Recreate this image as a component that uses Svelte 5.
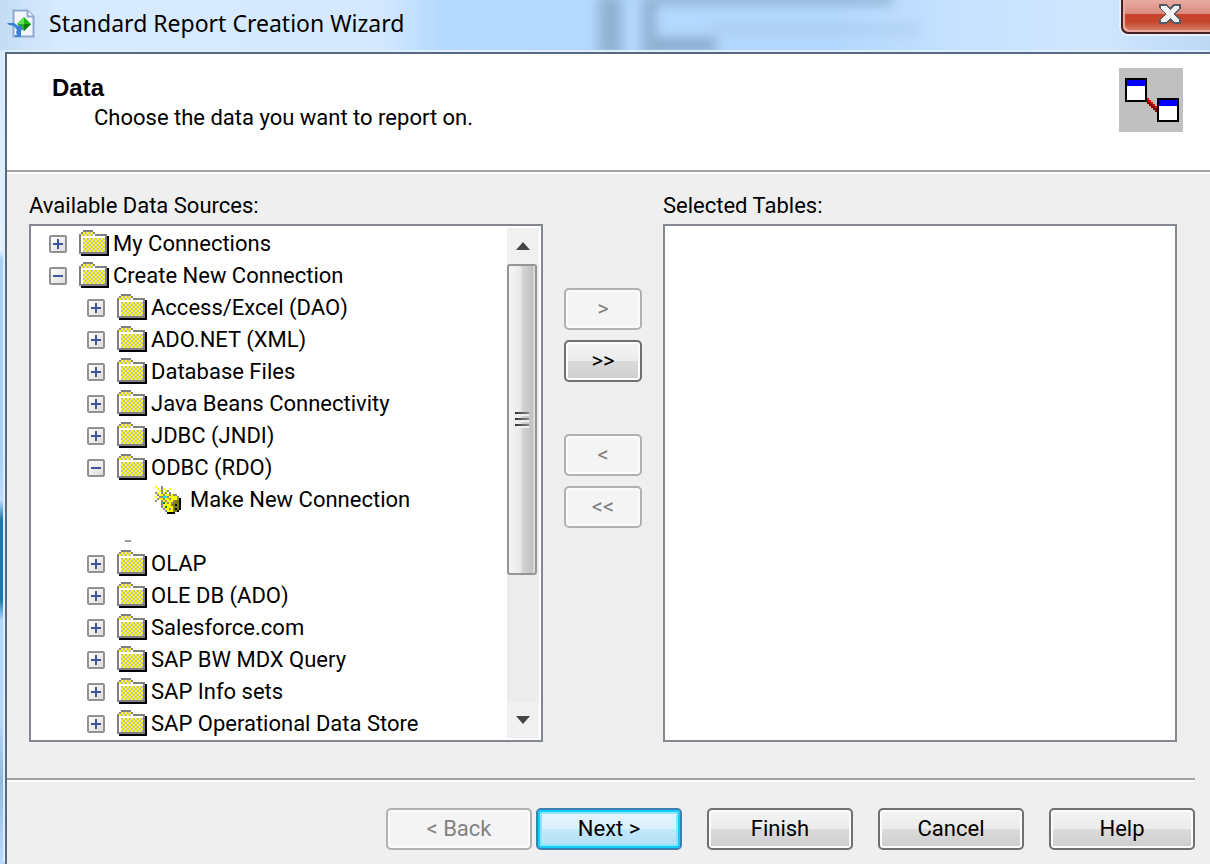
<script lang="ts">
	type Item = {
		label: string;
		level: number;
		kind?: "folder" | "action" | "blank";
		open?: boolean;
	};

	let items: Item[] = $state([
		{ label: "My Connections", level: 0 },
		{ label: "Create New Connection", level: 0, open: true },
		{ label: "Access/Excel (DAO)", level: 1 },
		{ label: "ADO.NET (XML)", level: 1 },
		{ label: "Database Files", level: 1 },
		{ label: "Java Beans Connectivity", level: 1 },
		{ label: "JDBC (JNDI)", level: 1 },
		{ label: "ODBC (RDO)", level: 1, open: true },
		{ label: "Make New Connection", level: 2, kind: "action" },
		{ label: "", level: 2, kind: "blank" },
		{ label: "OLAP", level: 1 },
		{ label: "OLE DB (ADO)", level: 1 },
		{ label: "Salesforce.com", level: 1 },
		{ label: "SAP BW MDX Query", level: 1 },
		{ label: "SAP Info sets", level: 1 },
		{ label: "SAP Operational Data Store", level: 1 },
	]);

	// One character per pixel, see sparkColors
	const spark = [
		"Y..G.........",
		".Y.GY..Y.....",
		"..YG.YG......",
		"GY.GYG.G.....",
		".GYYGYYGYGG..",
		"Y.GGCCGYYYYG.",
		".GYYGYYGYYYGK",
		"G..GYGYYYGOOK",
		"...GEYGYGOOOK",
		"...GYYYYOOKOK",
		"...GYEYYYOOOK",
		"....GYYGYOKOK",
		".....GYYYOOK.",
		"......KKKK...",
	];
	const sparkColors: Record<string, string> = {
		Y: "#ffff00",
		G: "#8c8c80",
		O: "#808000",
		K: "#000000",
		C: "#20e0e0",
		E: "#008040",
	};
</script>

<div class="window">
	<header class="titlebar">
		<svg class="app-icon" width="28" height="30" viewBox="0 0 28 30" aria-hidden="true">
			<path d="M6.500 1.500h14l6 6v20h-20z" fill="#f2f6fb" stroke="#8fa9cf" stroke-width="2" />
			<path d="M20.500 1.500v6h6" fill="#fff" stroke="#8fa9cf" stroke-width="2" />
			<path d="M17 8l7 7-7 7-7-7z" fill="#18b818" />
			<path d="M17 8v7h-7z" fill="#67dc55" />
			<path d="M17 22v-7h7z" fill="#087d12" />
			<path d="M0 14h7l4 3 3-2v3l2 1-2 3v6H8v-2h2l-1-3 1-2-3-4-5-1z" fill="#397fd3" />
		</svg>
		<h1>Standard Report Creation Wizard</h1>
		<div class="ghost" aria-hidden="true"></div>
		<button class="close" aria-label="Close">
			<svg width="22" height="20" viewBox="0 0 11 10" shape-rendering="crispEdges">
				<path d="M0 0h4l1.500 2L7 0h4v2L8 5l3 3v2H7L5.500 8 4 10H0V8l3-3-3-3z" fill="#555c69" />
				<path d="M1 1h2.500l2 2 2-2H10v1L7.500 5 10 8v1H7.500l-2-2-2 2H1V8l2.500-3L1 2z" fill="#f2f2f2" />
			</svg>
		</button>
	</header>

	<div class="frame">
		<div class="intro">
			<div>
				<h2>Data</h2>
				<p>Choose the data you want to report on.</p>
			</div>
			<svg width="64" height="64" viewBox="0 0 32 32" shape-rendering="crispEdges" aria-hidden="true">
				<path d="M0 0h32v32H0z" fill="#c0c0c0" />
				{#each [0, 1, 2, 3, 4] as i}
					<rect x={14 + i} y={15 + i} width="1" height="1" fill="#f00" />
					<rect x={14 + i} y={16 + i} width="1" height="2" fill="#900000" />
				{/each}
				<path d="M3 5h11v12H3zM19 15h11v12H19z" fill="#000" />
				<path d="M4 6h9v10H4zM20 16h9v10h-9z" fill="#fff" />
				<path d="M4 6h9v3H4zM20 16h9v3h-9z" fill="#00f" />
			</svg>
		</div>

		<main>
			<section>
				<h3 id="sources">Available Data Sources:</h3>
				<div class="panel">
					<ul aria-labelledby="sources">
						{#each items as item}
							<li class="level-{item.level}">
								{#if item.kind === "blank"}
									<span class="dash"></span>
								{:else if item.kind === "action"}
									<svg width="26" height="28" viewBox="0 0 13 14" shape-rendering="crispEdges" aria-hidden="true">
										{#each spark as row, y}
											{#each row as c, x}
												{#if c !== "."}
													<rect {x} {y} width="1" height="1" fill={sparkColors[c]} />
												{/if}
											{/each}
										{/each}
									</svg>
									<a href="#new">{item.label}</a>
								{:else}
									<button
										class="toggle"
										aria-label={item.label}
										aria-expanded={!!item.open}
										onclick={() => (item.open = !item.open)}
									>
										<svg width="10" height="10" viewBox="0 0 5 5" shape-rendering="crispEdges">
											<path d={item.open ? "M0 2h5v1H0z" : "M0 2h2V0h1v2h2v1H3v2H2V3H0z"} fill="#3c559f" />
										</svg>
									</button>
									<svg class="folder" width="30" height="26" viewBox="0 0 15 13" shape-rendering="crispEdges" aria-hidden="true">
										<defs>
											<pattern id="dither" width="2" height="2" patternUnits="userSpaceOnUse">
												<path d="M0 0h2v2H0z" fill="#ff0" />
												<path d="M0 0h1v1H0zM1 1h1v1H1z" fill="#c0c0c0" />
											</pattern>
										</defs>
										<path d="M1 12h13V3h1v10H1z" fill="#000" />
										<path d="M0 2h1V1h1V0h5v1h1v1h6v10H0z" fill="#808080" />
										<path d="M1 2h1V1h5v1h1v1h5v8H1z" fill="#fff" />
										<path d="M2 1h5v1H2zM1 2h6v1H1zM2 4h11v7H2z" fill="url(#dither)" />
									</svg>
									<span>{item.label}</span>
								{/if}
							</li>
						{/each}
					</ul>
					<div class="scrollbar">
						<button aria-label="Scroll up">
							<svg width="14" height="8" viewBox="0 0 14 8"><path d="M7 0l7 8H0z" fill="#444" /></svg>
						</button>
						<div class="track">
							<div class="thumb"><i></i><i></i><i></i></div>
						</div>
						<button aria-label="Scroll down">
							<svg width="14" height="8" viewBox="0 0 14 8"><path d="M0 0h14L7 8z" fill="#444" /></svg>
						</button>
					</div>
				</div>
			</section>

			<div class="movers">
				<div>
					<button class="btn" disabled>&gt;</button>
					<button class="btn">&gt;&gt;</button>
				</div>
				<div>
					<button class="btn" disabled>&lt;</button>
					<button class="btn" disabled>&lt;&lt;</button>
				</div>
			</div>

			<section>
				<h3>Selected Tables:</h3>
				<div class="panel"></div>
			</section>
		</main>

		<footer>
			<div class="pair">
				<button class="btn" disabled>&lt; Back</button>
				<button class="btn default">Next &gt;</button>
			</div>
			<button class="btn">Finish</button>
			<button class="btn">Cancel</button>
			<button class="btn">Help</button>
		</footer>
	</div>
</div>

<style>
	:global(body) {
		margin: 0;
	}

	.window {
		display: flex;
		flex-direction: column;
		min-height: 100vh;
		box-sizing: border-box;
		padding-left: 3px;
		background: linear-gradient(
			#bddcf8 0,
			#d5eaff 54px,
			#e4f2ff 250px,
			#a9cff6 260px,
			#a9cff6 460px,
			#bddcff 500px,
			#1878b4 520px,
			#1878b4 600px,
			#b0d7fa 620px,
			#b8d9f8 720px,
			#91b8de 780px,
			#b9dafb 100%
		);
		color: #000;
		font-family: Roboto, "Liberation Sans", sans-serif;
		font-size: 22px;
		line-height: 32px;
	}

	h1,
	h2,
	h3,
	p,
	ul {
		margin: 0;
		padding: 0;
		font-size: inherit;
		font-weight: normal;
	}

	/* Title bar */
	.titlebar {
		position: relative;
		display: flex;
		align-items: flex-start;
		height: 50px;
		margin-left: -3px;
		padding-left: 7px;
		background: linear-gradient(
			90deg,
			#c3ddf5 0,
			#d9ebff 60px,
			#d4e8ff 380px,
			#b5daff 440px,
			#b4d8fd 840px,
			#c6e2ff 960px,
			#d0e6ff 1100px,
			#bcd9f4 100%
		);
		overflow: hidden;
	}
	.app-icon {
		margin-top: 9px;
	}
	h1 {
		margin: 7px 0 0 14px;
		font-family: "Noto Sans", "Open Sans", sans-serif;
		font-size: 23px;
	}
	/* Blurred remains of the window behind the glass */
	.ghost {
		position: absolute;
		left: 598px;
		top: -4px;
		width: 320px;
		height: 60px;
		filter: blur(6px);
		background:
			linear-gradient(#90b1d2, #90b1d2) 0 0 / 24px 60px no-repeat,
			linear-gradient(#90b1d2, #90b1d2) 44px 0 / 14px 60px no-repeat,
			linear-gradient(#88a8ca, #88a8ca) 44px 0 / 250px 8px no-repeat,
			linear-gradient(#88a8ca, #88a8ca) 44px 42px / 74px 14px no-repeat,
			linear-gradient(#a3c4e8, #a3c4e8) 110px 31px / 270px 5px no-repeat;
	}
	.close {
		display: flex;
		align-items: flex-start;
		justify-content: center;
		box-sizing: border-box;
		width: 89px;
		height: 34px;
		margin-left: auto;
		padding: 4px 0 0 6px;
		border: 2px solid #4a1d20;
		border-width: 0 0 2px 2px;
		border-radius: 0 0 0 7px;
		background: linear-gradient(#e9aca2 0, #d98a7c 14px, #c6432a 14px, #c4472d 22px, #d98470 100%);
		box-shadow: inset 2px -2px #e9aaa0, 0 0 0 2px #e2f0ff;
	}

	/* Client area */
	.frame {
		flex: 1;
		display: flex;
		flex-direction: column;
		margin-top: 2px;
		margin-left: 2px;
		border-left: 2px solid #566980;
		border-top: 2px solid #566980;
		box-shadow: -2px -2px #dceeff;
		background: #efefef;
	}
	.intro {
		display: flex;
		justify-content: space-between;
		align-items: flex-start;
		padding: 14px 27px 38px 45px;
		background: #fff;
		border-bottom: 2px solid #a0a0a0;
		box-shadow: 0 2px #fff;
	}
	.intro h2 {
		margin-top: 4px;
		font-family: "Liberation Sans", sans-serif;
		font-size: 24px;
		font-weight: bold;
	}
	.intro p {
		margin: -2px 0 0 42px;
	}
	/* the text column is 66px, the picture 64px */
	.intro > div {
		margin-bottom: -2px;
	}
	main {
		flex: 1;
		display: grid;
		grid-template-columns: 1fr 78px 1fr;
		column-gap: 21px;
		padding: 18px 33px 36px 22px;
	}
	section {
		display: flex;
		flex-direction: column;
	}
	h3 {
		margin-bottom: 2px;
	}
	.panel {
		flex: 1;
		display: flex;
		padding: 2px 2px 0;
		border: 2px solid #828790;
		background: #fff;
	}

	/* Tree */
	ul {
		flex: 1;
		list-style: none;
	}
	li {
		display: flex;
		align-items: center;
		height: 32px;
		padding-left: 16px;
		white-space: nowrap;
	}
	.level-1 {
		padding-left: 54px;
	}
	.level-2 {
		padding-left: 122px;
	}
	.toggle {
		display: flex;
		align-items: center;
		justify-content: center;
		box-sizing: border-box;
		width: 18px;
		height: 18px;
		padding: 0;
		border: 2px solid #919191;
		border-radius: 2px;
		background: linear-gradient(135deg, #fff, #dcdcdc);
	}
	.folder {
		margin: 0 4px 2px 12px;
	}
	li a {
		margin-left: 9px;
		color: inherit;
		text-decoration: none;
	}
	.dash {
		width: 6px;
		height: 2px;
		margin: 18px 0 0 -30px;
		background: #999;
	}
	.scrollbar {
		display: flex;
		flex-direction: column;
		width: 32px;
		margin-bottom: 2px;
		background: #ececec;
	}
	.scrollbar button {
		height: 36px;
		padding: 0;
		border: 0;
		background: #f0f0f0;
		line-height: 0;
	}
	.track {
		flex: 1;
	}
	.thumb {
		display: flex;
		flex-direction: column;
		align-items: center;
		justify-content: center;
		gap: 4px;
		box-sizing: border-box;
		width: 30px;
		height: 71%;
		border: 2px solid #959595;
		border-radius: 3px;
		background: linear-gradient(90deg, #f6f6f6 0, #e8e8e8 45%, #d6d6d6 50%, #c0c0c4 90%, #dcdcdc 95%);
	}
	.thumb i {
		width: 14px;
		height: 2px;
		background: linear-gradient(90deg, #333, #888);
		box-shadow: 0 2px #f0f0f0;
	}

	/* Buttons */
	.btn {
		height: 42px;
		padding: 0;
		border: 2px solid #707070;
		border-radius: 5px;
		background: linear-gradient(#f4f4f4 0, #ebebeb 50%, #dbdbdb 50%, #cdcdcd 100%);
		box-shadow: inset 0 0 0 2px #fbfbfb;
		color: #000;
		font: inherit;
	}
	.btn:disabled {
		border-color: #adb2b5;
		background: #f4f4f4;
		color: #838383;
	}
	.default {
		border-color: #3c7fb1;
		background: linear-gradient(#e8f5fd 0, #d9f0fc 50%, #c4e8fa 50%, #b0def6 100%);
		box-shadow: inset 0 0 0 2px #10cdfd, inset 0 0 0 4px #8be5ff;
	}
	.movers {
		display: flex;
		flex-direction: column;
		gap: 52px;
		padding-top: 98px;
	}
	.movers div {
		display: flex;
		flex-direction: column;
		gap: 10px;
	}
	footer {
		display: flex;
		justify-content: flex-end;
		gap: 25px;
		margin-right: 15px;
		padding: 28px 0 14px;
		border-top: 2px solid #a0a0a0;
		box-shadow: inset 0 2px #fff;
	}
	.pair {
		display: flex;
		gap: 4px;
	}
	footer .btn {
		width: 146px;
	}
</style>
